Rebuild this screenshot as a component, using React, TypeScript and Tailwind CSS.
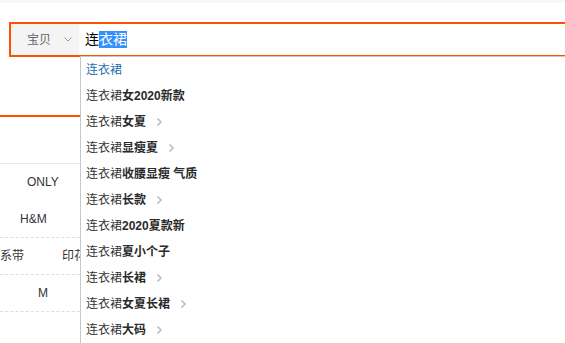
import React from 'react';

const cjk = { fontFamily: '"Liberation Sans", "Noto Sans CJK SC", sans-serif' };

const suggestions: { head: string; rest: string; more: boolean }[] = [
  { head: '连衣裙', rest: '女2020新款', more: false },
  { head: '连衣裙', rest: '女夏', more: true },
  { head: '连衣裙', rest: '显瘦夏', more: true },
  { head: '连衣裙', rest: '收腰显瘦 气质', more: false },
  { head: '连衣裙', rest: '长款', more: true },
  { head: '连衣裙', rest: '2020夏款新', more: false },
  { head: '连衣裙', rest: '夏小个子', more: false },
  { head: '连衣裙', rest: '长裙', more: true },
  { head: '连衣裙', rest: '女夏长裙', more: true },
  { head: '连衣裙', rest: '大码', more: true },
];

const Chevron = () => (
  <svg width="7" height="10" viewBox="0 0 7 10" className="ml-[10px]">
    <polyline points="1.5,1.5 5,5 1.5,8.5" fill="none" stroke="#bdbdbd" strokeWidth="1.6" />
  </svg>
);

const App: React.FC = () => {
  return (
    <div className="relative w-[565px] h-[343px] overflow-hidden bg-white text-[#333]" style={cjk}>
      <div className="h-[3px] bg-[#f3f8fd]" />

      {/* search bar */}
      <div className="mt-[19px] ml-[9px] h-[35px] flex border-2 border-r-0 border-[#ff5000]">
        <div className="w-[69px] bg-[#f4f4f4] flex items-center pl-[16px] text-[12px] text-[#666] border-r border-[#fafafa]">
          <span>宝贝</span>
          <svg width="8" height="5" viewBox="0 0 8 5" className="ml-[13px]">
            <polyline points="0.5,0.5 4,4 7.5,0.5" fill="none" stroke="#999" strokeWidth="1" />
          </svg>
        </div>
        <div className="flex-1 bg-white flex items-center pl-[5px] text-[14px] text-black">
          <span>连</span>
          <span className="bg-[#3390ff] text-white leading-[17px]">衣裙</span>
        </div>
      </div>

      {/* page content behind the dropdown */}
      <div className="w-[80px] text-[12px]">
        <div className="mt-[58px] h-[2px] bg-[#ff5000]" />
        <div className="mt-[46px] h-px bg-[#e8e8e8]" />
        <div className="h-[36px] flex items-center pl-[27px]">ONLY</div>
        <div className="h-[37px] flex items-center pl-[20px]">H&amp;M</div>
        <div className="h-[37px] flex items-center border-t border-dashed border-[#ddd] whitespace-nowrap">
          <span className="w-[62px] shrink-0">系带</span>
          <span className="shrink-0">印花</span>
        </div>
        <div className="h-[37px] flex items-center pl-[38px] border-t border-dashed border-[#ddd]">M</div>
        <div className="border-t border-dashed border-[#ddd]" />
      </div>

      {/* suggestion dropdown */}
      <div className="absolute left-[80px] top-[56px] right-0 bottom-0 bg-white border-l border-t border-[#c8c8c8] text-[12px]">
        <div className="h-[26px] flex items-center pl-[5px] text-[#1f6fae]">连衣裙</div>
        {suggestions.map((s, i) => (
          <div key={i} className="h-[26px] flex items-center pl-[5px] whitespace-nowrap">
            <span>{s.head}</span>
            <span className="font-bold text-[#2a2a2a]">{s.rest}</span>
            {s.more && <Chevron />}
          </div>
        ))}
      </div>
    </div>
  );
};

export default App;
